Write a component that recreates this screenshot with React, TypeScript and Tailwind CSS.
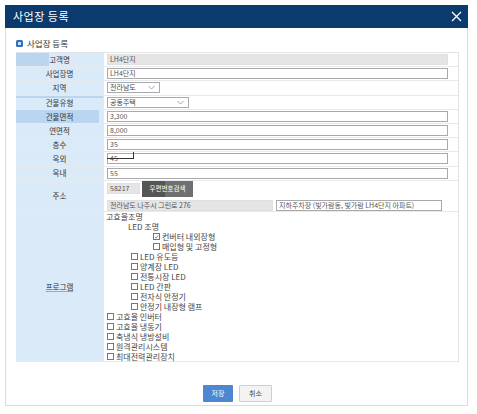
import React from 'react'

const labelBase = 'w-[88px] shrink-0 flex items-center justify-center border-r border-[#e3e8ee] text-[7.5px] text-[#333]'

function Row({ label, children, h = 'h-[14.2px]', labelBg = 'bg-[#dbeaf8]' }: { label: string; children: React.ReactNode; h?: string; labelBg?: string }) {
  return (
    <div className={`flex ${h} border-b border-[#e6e9ee]`}>
      <div className={`${labelBase} ${labelBg}`}>{label}</div>
      <div className="flex-1 flex items-center pl-[3px] relative">{children}</div>
    </div>
  )
}

function Input({ value, gray, w = 'w-[341px]' }: { value: string; gray?: boolean; w?: string }) {
  return (
    <div
      className={`${w} h-[11px] flex items-center px-[2px] text-[7px] leading-none text-[#555] border ${
        gray ? 'bg-[#e5e5e5] border-[#e0e0e0]' : 'bg-white border-[#a9a9a9]'
      }`}
    >
      {value}
    </div>
  )
}

function Select({ value, w }: { value: string; w: string }) {
  return (
    <div className={`${w} h-[11px] flex items-center justify-between px-[2px] text-[7px] leading-none text-[#444] border border-[#a9a9a9] bg-white`}>
      <span>{value}</span>
      <svg width="7" height="5" viewBox="0 0 7 5" className="mr-[2px]">
        <path d="M0.5 1 L3.5 4 L6.5 1" fill="none" stroke="#8a9bb0" strokeWidth="0.9" />
      </svg>
    </div>
  )
}

function Check({ label, checked, indent }: { label: string; checked?: boolean; indent: string }) {
  return (
    <div className={`h-[10px] flex items-center ${indent}`}>
      <span className="w-[7px] h-[7px] border border-[#777] bg-white mr-[2px] flex items-center justify-center">
        {checked && (
          <svg width="6" height="6" viewBox="0 0 6 6">
            <path d="M1 3 L2.5 4.5 L5 1.2" fill="none" stroke="#666" strokeWidth="0.9" />
          </svg>
        )}
      </span>
      <span>{label}</span>
    </div>
  )
}

export default function App() {
  return (
    <div className="w-[477px] h-[414px] bg-white pt-[5px] pl-[5px] font-['Noto_Sans_CJK_KR',sans-serif]">
      <div className="w-[463px] h-[401px] border border-[#dcdcdc] bg-white flex flex-col">
        {/* 헤더 */}
        <div className="h-[23px] -mt-px -mx-px bg-[#0b3a6f] flex items-center justify-between pl-[8px] pr-[6px]">
          <span className="text-white text-[11px] tracking-[0.5px]">사업장 등록</span>
          <svg width="11" height="11" viewBox="0 0 11 11">
            <path d="M1 1 L10 10 M10 1 L1 10" stroke="#fff" strokeWidth="1.3" />
          </svg>
        </div>

        <div className="pl-[10px] pr-[8px] pt-[9px]">
          <div className="h-[12px] flex items-center gap-[4px] mb-[3px]">
            <span className="w-[7px] h-[7px] rounded-[1.5px] bg-[#2e6fc4] flex items-center justify-center">
              <span className="w-[3px] h-[3px] bg-[#cfe0f5]" />
            </span>
            <span className="text-[8.5px] text-[#333]">사업장 등록</span>
          </div>

          {/* 테이블 */}
          <div className="border-t border-r border-[#e0e3e8]">
            <Row label="고객명" labelBg="bg-[linear-gradient(to_right,#b9d5f0_38%,#dbeaf8_38%)]">
              <Input value="LH4단지" gray />
            </Row>
            <Row label="사업장명">
              <Input value="LH4단지" />
            </Row>
            <Row label="지역">
              <Select value="전라남도" w="w-[53px]" />
            </Row>
            <Row label="건물유형" labelBg="bg-[linear-gradient(to_bottom,#b9d5f0_14%,#dbeaf8_14%)]">
              <Select value="공동주택" w="w-[82px]" />
            </Row>
            <Row label="건물면적" labelBg="bg-[linear-gradient(to_right,#b9d5f0_95%,#dbeaf8_95%)]">
              <Input value="3,300" />
            </Row>
            <Row label="연면적">
              <Input value="8,000" />
            </Row>
            <Row label="층수">
              <Input value="35" />
            </Row>
            <Row label="옥외">
              <Input value="45" />
              <div className="absolute left-[3px] top-[0px] w-[27px] h-[7px] border-b border-r border-[#333]" />
            </Row>
            <Row label="옥내">
              <Input value="55" />
            </Row>
            <Row label="주소" h="h-[31px]">
              <div className="flex flex-col gap-[3px]">
                <div className="flex items-center gap-[2px]">
                  <Input value="58217" gray w="w-[33px]" />
                  <div className="w-[51px] h-[16px] bg-[linear-gradient(to_right,#555_45%,#6f6f6f_45%)] text-white text-[6.5px] flex items-center justify-center">
                    우편번호검색
                  </div>
                </div>
                <div className="flex items-center gap-[3px]">
                  <Input value="전라남도 나주시 그린로 276" gray w="w-[166px]" />
                  <Input value="지하주차장 (빛가람동, 빛가람 LH4단지 아파트)" w="w-[166px]" />
                </div>
              </div>
            </Row>
            <div className="flex h-[150px] border-b border-[#e6e9ee]">
              <div className={`${labelBase} bg-[#dbeaf8]`}>
                <span className="underline decoration-[#9ab]">프로그램</span>
              </div>
              <div className="flex-1 pl-[2px] text-[8px] text-[#444] leading-[10px]">
                <div className="h-[10px]">고효율조명</div>
                <div className="h-[10px] pl-[22px]">LED 조명</div>
                <Check label="컨버터 내외장형" checked indent="pl-[47px]" />
                <Check label="매입형 및 고정형" indent="pl-[47px]" />
                <Check label="LED 유도등" indent="pl-[25px]" />
                <Check label="양계장 LED" indent="pl-[25px]" />
                <Check label="전통시장 LED" indent="pl-[25px]" />
                <Check label="LED 간판" indent="pl-[25px]" />
                <Check label="전자식 안정기" indent="pl-[25px]" />
                <Check label="안정기 내장형 램프" indent="pl-[25px]" />
                <Check label="고효율 인버터" indent="pl-[1px]" />
                <Check label="고효율 냉동기" indent="pl-[1px]" />
                <Check label="축냉식 냉방설비" indent="pl-[1px]" />
                <Check label="원격관리시스템" indent="pl-[1px]" />
                <Check label="최대전력관리장치" indent="pl-[1px]" />
              </div>
            </div>
          </div>

          {/* 버튼 */}
          <div className="flex justify-center gap-[6px] mt-[23px]">
            <button className="w-[30px] h-[17px] bg-[#4d87d1] text-white text-[7px] rounded-[1px]">저장</button>
            <button className="w-[33px] h-[17px] bg-[#f3f3f3] border border-[#cfcfcf] text-[#444] text-[7px] rounded-[1px]">취소</button>
          </div>
        </div>
      </div>
    </div>
  )
}
